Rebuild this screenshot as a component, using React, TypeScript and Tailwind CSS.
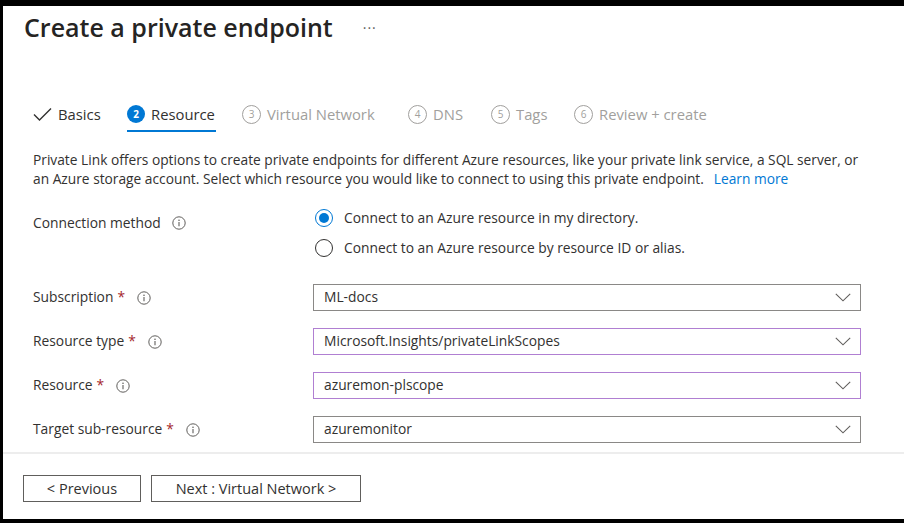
import React from "react";

const InfoIcon = () => (
  <svg width="14" height="14" viewBox="0 0 14 14" className="shrink-0">
    <circle cx="7" cy="7" r="6.2" fill="none" stroke="#605e5c" strokeWidth="1" />
    <circle cx="7" cy="4.3" r="0.8" fill="#605e5c" />
    <line x1="7" y1="6" x2="7" y2="10.2" stroke="#605e5c" strokeWidth="1.1" />
  </svg>
);

const Chevron = () => (
  <svg width="16" height="9" viewBox="0 0 16 9" className="shrink-0">
    <polyline points="0.8,0.8 8,7.8 15.2,0.8" fill="none" stroke="#605e5c" strokeWidth="1.1" />
  </svg>
);

const Step = ({ n }: { n: number }) => (
  <span className="w-[19px] h-[19px] rounded-full border border-[#a19f9d] text-[#a19f9d] text-[10px] flex items-center justify-center shrink-0">
    {n}
  </span>
);

const Label = ({ text, req = true }: { text: string; req?: boolean }) => (
  <div className="flex items-center">
    <span>{text}</span>
    {req && <span className="text-[#a4262c] ml-[4px]">*</span>}
    <span className="ml-[12px] flex"><InfoIcon /></span>
  </div>
);

const Dropdown = ({ value, focus }: { value: string; focus?: boolean }) => (
  <div
    className={
      "w-[548px] h-[27px] flex items-center justify-between pl-[10px] pr-[9px] bg-white " +
      (focus ? "border-[1.5px] border-[#b07fd2]" : "border border-[#8a8886]")
    }
  >
    <span>{value}</span>
    <Chevron />
  </div>
);

export default function App() {
  return (
    <div
      className="w-[904px] h-[523px] bg-black pt-[6px] pl-[3px] pb-[4px] flex text-[#323130]"
      style={{ fontFamily: '"Open Sans", "Noto Sans", sans-serif' }}
    >
      <div className="flex-1 bg-white flex flex-col">
        {/* Title */}
        <div className="mt-[6px] h-[30px] pl-[21px] flex items-center">
          <h1 className="text-[25px] font-semibold leading-[30px] text-[#252423]">
            Create a private endpoint
          </h1>
          <span className="ml-[30px] text-[14px] text-[#605e5c] tracking-[1px]">···</span>
        </div>

        {/* Tabs */}
        <div className="mt-[54px] h-[36px] pl-[30px] flex text-[14.8px]">
          <div className="w-[94px] flex items-center gap-[6px]">
            <svg width="19" height="14" viewBox="0 0 19 14">
              <polyline points="1,7.5 6.5,13 18,1.5" fill="none" stroke="#323130" strokeWidth="1.4" />
            </svg>
            <span>Basics</span>
          </div>
          <div className="w-[115px] flex">
            <div className="flex items-center gap-[6px] border-b-2 border-[#0078d4] pt-[2px] pr-[1px]">
              <span className="w-[18px] h-[18px] rounded-full bg-[#0078d4] text-white text-[10px] font-bold flex items-center justify-center">
                2
              </span>
              <span>Resource</span>
            </div>
          </div>
          <div className="w-[166px] flex items-center gap-[6px] text-[#a19f9d]">
            <Step n={3} />
            <span>Virtual Network</span>
          </div>
          <div className="w-[83px] flex items-center gap-[6px] text-[#a19f9d]">
            <Step n={4} />
            <span>DNS</span>
          </div>
          <div className="w-[83px] flex items-center gap-[6px] text-[#a19f9d]">
            <Step n={5} />
            <span>Tags</span>
          </div>
          <div className="flex items-center gap-[6px] text-[#a19f9d]">
            <Step n={6} />
            <span>Review + create</span>
          </div>
        </div>

        {/* Description */}
        <div className="mt-[18px] pl-[30px] text-[13.75px] leading-[19px] whitespace-nowrap">
          Private Link offers options to create private endpoints for different Azure resources, like your private link service, a SQL server, or
          <br />
          an Azure storage account. Select which resource you would like to connect to using this private endpoint.
          <span className="ml-[10px] text-[#0078d4]">Learn more</span>
        </div>

        {/* Form */}
        <div className="mt-[15px] pl-[30px] text-[13.8px] grid grid-cols-[280px_548px]">
          <div className="pt-[10px] leading-[19px]">
            <div className="flex items-center">
              <span>Connection method</span>
              <span className="ml-[11px] flex"><InfoIcon /></span>
            </div>
          </div>
          <div className="flex flex-col">
            <div className="h-[30px] flex items-center">
              <span className="w-[18px] h-[18px] rounded-full border border-[#0078d4] flex items-center justify-center ml-[2px]">
                <span className="w-[10px] h-[10px] rounded-full bg-[#0078d4]" />
              </span>
              <span className="ml-[11px]">Connect to an Azure resource in my directory.</span>
            </div>
            <div className="h-[30px] flex items-center">
              <span className="w-[18px] h-[18px] rounded-full border border-[#323130] ml-[2px]" />
              <span className="ml-[11px]">Connect to an Azure resource by resource ID or alias.</span>
            </div>
          </div>
        </div>

        <div className="mt-[21px] pl-[30px] text-[13.8px] flex flex-col gap-[17px]">
          <div className="grid grid-cols-[280px_548px] items-center">
            <Label text="Subscription" />
            <Dropdown value="ML-docs" />
          </div>
          <div className="grid grid-cols-[280px_548px] items-center">
            <Label text="Resource type" />
            <Dropdown value="Microsoft.Insights/privateLinkScopes" focus />
          </div>
          <div className="grid grid-cols-[280px_548px] items-center">
            <Label text="Resource" />
            <Dropdown value="azuremon-plscope" focus />
          </div>
          <div className="grid grid-cols-[280px_548px] items-center">
            <Label text="Target sub-resource" />
            <Dropdown value="azuremonitor" />
          </div>
        </div>

        {/* Separator */}
        <div className="mt-[9px] h-[2px] bg-[#ededed]" />

        {/* Footer */}
        <div className="mt-[21px] pl-[20px] flex gap-[10px] text-[14.5px]">
          <button className="w-[118px] h-[27px] border border-[#605e5c] bg-white flex items-center justify-center">
            &lt; Previous
          </button>
          <button className="w-[210px] h-[27px] border border-[#605e5c] bg-white flex items-center justify-center">
            Next : Virtual Network &gt;
          </button>
        </div>
      </div>
    </div>
  );
}
